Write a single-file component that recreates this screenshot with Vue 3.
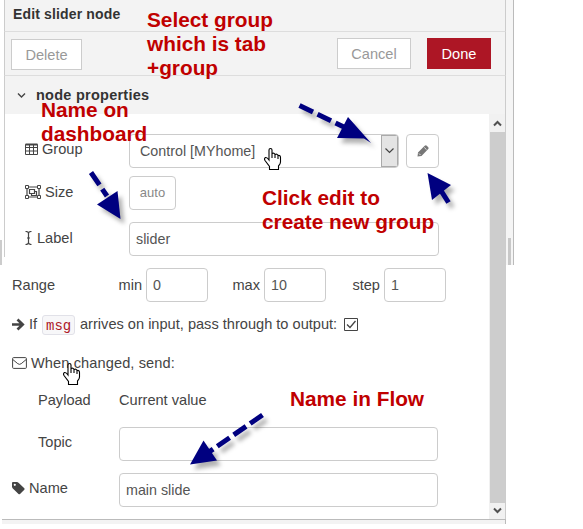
<script setup>
import { ref } from 'vue'

const label = ref('slider')
const range = ref([
  { name: 'min', value: '0' },
  { name: 'max', value: '10' },
  { name: 'step', value: '1' },
])
const topic = ref('')
const name = ref('main slide')

const notes = [
  { id: 'tab', lines: ['Select group', 'which is tab', '+group'] },
  { id: 'dash', lines: ['Name on', 'dashboard'] },
  { id: 'edit', lines: ['Click edit to', 'create new group'] },
  { id: 'flow', lines: ['Name in Flow'] },
]
const arrows = [
  { line: 'M299.500 105.500L346 128', head: '348,117 371,143 364,138.500 337,138' },
  { line: 'M91 172.500L107 196', head: '117.500,191 120.500,219 97,204.500' },
  { line: 'M448.500 202.500L440 189', head: '427.500,173 451,185 432,200' },
  { line: 'M262.500 415L209 452', head: '203.500,440.500 190,464.500 217,460.500' },
]
const hands = [{ x: 264, y: 148 }, { x: 63, y: 363 }]
</script>

<template>
  <main class="screen">
    <i class="edge-thumb left"></i>
    <section class="editor">
      <header class="title">Edit slider node</header>
      <nav class="toolbar">
        <button class="btn delete">Delete</button>
        <button class="btn cancel">Cancel</button>
        <button class="btn done">Done</button>
      </nav>
      <div class="section-head">
        <svg width="9" height="7" viewBox="0 0 9 7"><path d="M1 1.500L4.500 5L8 1.500" stroke-width="1.400" /></svg>
        <span>node properties</span>
      </div>
      <div class="body">
        <form class="form" @submit.prevent>
          <div class="row group">
            <label>
              <svg class="icon" width="13" height="12" viewBox="0 0 13 12"><path d="M.5 1.500h12v10H.5zM.5 4.500h12M.5 8h12M4.500 1.500v10M8.500 1.500v10" /><path d="M.5 1.500h12" stroke-width="2" /></svg>
              <span>Group</span>
            </label>
            <div class="select"><span>Control [MYhome]</span><i><svg width="9" height="6" viewBox="0 0 9 6"><path d="M.5 .5L4.500 4.500L8.500 .5" stroke-width="1.200" /></svg></i></div>
            <button class="pencil"><svg width="12" height="12" viewBox="0 0 12 12"><path d="M.5 11.500L1 7.500L7.700 .8Q8.900 -.2 10 .9L11 2Q12.200 3.200 11 4.300L4.500 11Z" fill="#777" /><path d="M2 8.500L3.500 10M7.300 2.500L9.500 4.700" stroke="#fff" stroke-width=".8" /></svg></button>
          </div>
          <div class="row size">
            <label>
              <svg class="icon" width="16" height="14" viewBox="0 0 16 14"><path d="M2 2h12v10H2zM4.500 4.500h5v4h-5zM9.500 6.500h2v4h-5v-2" stroke-width="1.200" /><path d="M.5 .5h3v3h-3zM12.500 .5h3v3h-3zM.5 10.500h3v3h-3zM12.500 10.500h3v3h-3z" fill="#fff" /></svg>
              <span>Size</span>
            </label>
            <button class="auto">auto</button>
          </div>
          <div class="row label">
            <label>
              <svg class="icon" width="7" height="14" viewBox="0 0 7 14"><path d="M.5 .5Q3.500 .5 3.500 2.500Q3.500 .5 6.500 .5M3.500 2V12M2 7H5M.5 13.500Q3.500 13.500 3.500 11.500Q3.500 13.500 6.500 13.500" stroke-width="1.200" /></svg>
              <span>Label</span>
            </label>
            <input v-model="label" />
          </div>
          <div class="row range">
            <span class="range-title">Range</span>
            <div v-for="r in range" :key="r.name" class="range-field" :class="r.name">
              <span>{{ r.name }}</span><input v-model="r.value" />
            </div>
          </div>
          <div class="row pass">
            <svg width="13" height="13" viewBox="0 0 13 13"><path d="M0 6.500H10M5.500 1.500L10.700 6.500L5.500 11.500" stroke-width="2.700" /></svg>
            <span class="if">If</span><code>msg</code>
            <span class="arrives">arrives on input, pass through to output:</span>
            <svg class="check" width="14" height="13" viewBox="0 0 14 13"><path d="M.5 .5h13v12H.5z" /><path d="M3 6.500L6 9.500L11.500 3" stroke-width="1.300" /></svg>
          </div>
          <div class="row send">
            <svg width="15" height="12" viewBox="0 0 15 12"><rect x=".6" y=".6" width="13.800" height="10.800" rx="1" /><path d="M.8 2.500L5.800 6.700Q7.500 8 9.200 6.700L14.200 2.500" /></svg>
            <span>When changed, send:</span>
          </div>
          <div class="row payload"><span class="indent">Payload</span><span class="current">Current value</span></div>
          <div class="row topic"><span class="indent">Topic</span><input v-model="topic" /></div>
          <div class="row name">
            <label>
              <svg width="13" height="13" viewBox="0 0 13 13"><path d="M0 1Q0 0 1 0H5.200L6.500 .7L12.300 6.300Q13 7 12.300 7.700L8 12Q7.300 12.600 6.500 12L.6 6.200L0 5ZM2.800 1.700A1.100 1.100 0 1 0 2.800 3.900A1.100 1.100 0 1 0 2.800 1.700Z" fill="#444" stroke="none" fill-rule="evenodd" /></svg>
              <span>Name</span>
            </label>
            <input v-model="name" />
          </div>
        </form>
        <aside class="scrollbar">
          <svg width="9" height="7" viewBox="0 0 9 7"><path d="M1 5.500L4.500 2L8 5.500" /></svg>
          <i></i>
          <svg width="9" height="7" viewBox="0 0 9 7"><path d="M1 1.500L4.500 5L8 1.500" /></svg>
        </aside>
      </div>
      <footer></footer>
    </section>
    <div class="gutter"><i></i></div>

    <p v-for="n in notes" :key="n.id" class="note" :class="n.id">
      <span v-for="l in n.lines" :key="l">{{ l }}</span>
    </p>
    <svg class="overlay" width="583" height="529" viewBox="0 0 583 529">
      <g v-for="a in arrows" :key="a.line" class="arrow">
        <path :d="a.line" /><polygon :points="a.head" />
      </g>
      <g v-for="h in hands" :key="h.y" :transform="`translate(${h.x} ${h.y})`" class="hand">
        <path d="M5 12V2Q5 .5 6.500 .5T8 2V7V5.500Q10 4.500 11 6.500Q13 5.500 14 7.500Q16.500 7 16.500 9.500V14Q16.500 16 14.500 18V21.500H5.500V18.500L1 12.500Q-.2 10.500 1.500 9.500Q3 9 5 12ZM8 6V10M11 6.500V10M14 7.500V11" />
      </g>
    </svg>
  </main>
</template>

<style>
body { background: #fff; }
</style>

<style scoped>
* { box-sizing: border-box; }
.screen { position: relative; display: flex; width: 583px; height: 529px; overflow: hidden; background: #fff; font: 14.6px/20px "Liberation Sans", Arial, sans-serif; color: #444; }
svg { display: block; flex: none; fill: none; stroke: #444; }
button, input { font: inherit; color: #555; outline: 0; margin: 0; }
button { padding: 0; }
.edge-thumb.left { width: 2px; height: 25px; margin-top: 240px; background: #ccc; }
.editor { display: flex; flex-direction: column; width: 504px; height: 524px; }
.title { height: 32px; margin-left: 2px; padding: 4px 0 0 8px; border: solid #ccc; border-width: 0 1px 1px; border-bottom-color: #ddd; background: #f3f3f3; font-weight: bold; font-size: 14px; letter-spacing: .15px; color: #333; }
.toolbar { display: flex; height: 44px; margin-left: 2px; padding: 6px 14px 0 6px; border: solid #ccc; border-width: 0 1px 1px; border-bottom-color: #ddd; background: #f3f3f3; }
.btn { height: 31px; border: 1px solid #ccc; background: #fff; color: #999; }
.delete { width: 71px; margin-top: 1px; }
.cancel { width: 74px; margin-left: auto; }
.done { width: 64px; margin-left: 16px; border-color: #ad1625; background: #ad1625; color: #fff; }
.section-head { display: flex; align-items: center; height: 38px; margin-left: 2px; padding-left: 12px; border: solid #ccc; border-width: 0 1px; background: #f3f3f3; font-weight: bold; font-size: 14.5px; color: #333; }
.section-head span { margin-left: 10px; letter-spacing: .25px; }
.body { display: flex; height: 405px; }
.form { width: 487px; padding-top: 20px; }
.form::before { content: ""; position: absolute; left: 4px; top: 114px; width: 1px; height: 143px; background: #ccc; }
.row { display: flex; align-items: center; height: 34px; }
.row label { display: flex; align-items: center; }
.group label, .size label, .label label { width: 127px; padding-left: 23px; }
.group label, .name label { height: 30px; align-self: flex-start; }
.size label, .label label { height: 32px; align-self: flex-start; }
label span { margin-left: 5px; }
.size label span, .group label span { margin-left: 4px; }
input { height: 34px; padding: 0 6px; border: 1px solid #ccc; border-radius: 4px; background: #fff; font-size: 14.3px; }
.select { display: flex; justify-content: space-between; width: 270px; height: 34px; border: 1px solid #ccc; border-radius: 4px; overflow: hidden; align-items: center; padding-left: 10px; color: #555; font-size: 14.3px; }
.select i { display: flex; align-items: center; justify-content: center; width: 17px; height: 32px; border: 1px solid #aaa; background: #e4e4e4; }
.pencil { display: flex; align-items: center; justify-content: center; width: 33px; height: 34px; margin-left: 7px; border: 1px solid #ccc; border-radius: 4px; background: #fff; }
.pencil svg { stroke: none; }
.size { margin-top: 8px; }
.auto { width: 47px; height: 34px; border: 1px solid #ccc; border-radius: 4px; background: #fff; color: #888; font-size: 13px; }
.label { margin-top: 12px; }
.label input { width: 310px; }
.range { margin-top: 12px; padding-left: 10px; }
.range-title { width: 107px; }
.range-field { display: flex; align-items: center; justify-content: flex-end; }
.range-field span { margin-right: 4px; }
.range-field input { width: 62px; }
.range-field.min { width: 89px; }
.range-field.max { width: 118px; }
.range-field.step { width: 120px; }
.pass { height: 22px; margin-top: 11px; padding-left: 10px; }
.if { margin-left: 4px; width: 9px; }
code { height: 20px; margin: 1px 0 0 4px; padding: 0 3px; border: 1px solid #e1e1e8; border-radius: 3px; background: #f7f7f9; color: #ad1625; font: 14px/20px "Liberation Mono", monospace; width: 33px; }
.arrives { margin-left: 5px; width: 264px; white-space: nowrap; }
.send { height: 20px; margin-top: 18px; padding-left: 10px; }
.send span { margin-left: 4px; letter-spacing: .1px; }
.payload { height: 20px; margin-top: 17px; }
.indent { width: 117px; padding-left: 36px; }
.topic { margin-top: 17px; }
.topic .indent { margin-top: -4px; }
.topic input, .name input { width: 319px; }
.name { margin-top: 12px; }
.name label { width: 117px; padding-left: 10px; }
.name label span { margin-left: 4px; }
.scrollbar { display: flex; flex-direction: column; justify-content: space-between; align-items: center; width: 17px; padding: 6px 0 5px; background: #f1f1f1; border-right: 1px solid #ccc; }
.scrollbar svg { stroke: #505050; stroke-width: 2; }
.scrollbar i { width: 15px; height: 371px; background: #cdcdcd; }
.editor footer { height: 5px; border-top: 1px solid #bbb; border-right: 1px solid #bbb; background: #f3f3f3; }
.gutter { display: flow-root; width: 8px; height: 265px; border-right: 1px solid #bbb; background: #f5f5f5; }
.gutter i { display: block; width: 3px; height: 27px; margin: 238px 0 0 2px; background: #c8c8c8; }
.note { position: absolute; margin: 0; color: #c00000; font-weight: bold; font-size: 20.8px; line-height: 24px; white-space: nowrap; }
.note span { display: block; }
.tab { left: 147px; top: 8px; }
.dash { left: 41px; top: 98px; }
.edit { left: 262px; top: 186px; }
.flow { left: 290px; top: 387px; }
.overlay { position: absolute; inset: 0; pointer-events: none; }
.arrow { filter: drop-shadow(4px 5px 2px rgba(0, 0, 0, .3)); }
.arrow path { stroke: #000080; stroke-width: 5; stroke-dasharray: 15 5; }
.arrow polygon { fill: #000080; stroke: none; }
.hand path { fill: #fff; stroke: #000; stroke-width: 1.1; }
</style>
